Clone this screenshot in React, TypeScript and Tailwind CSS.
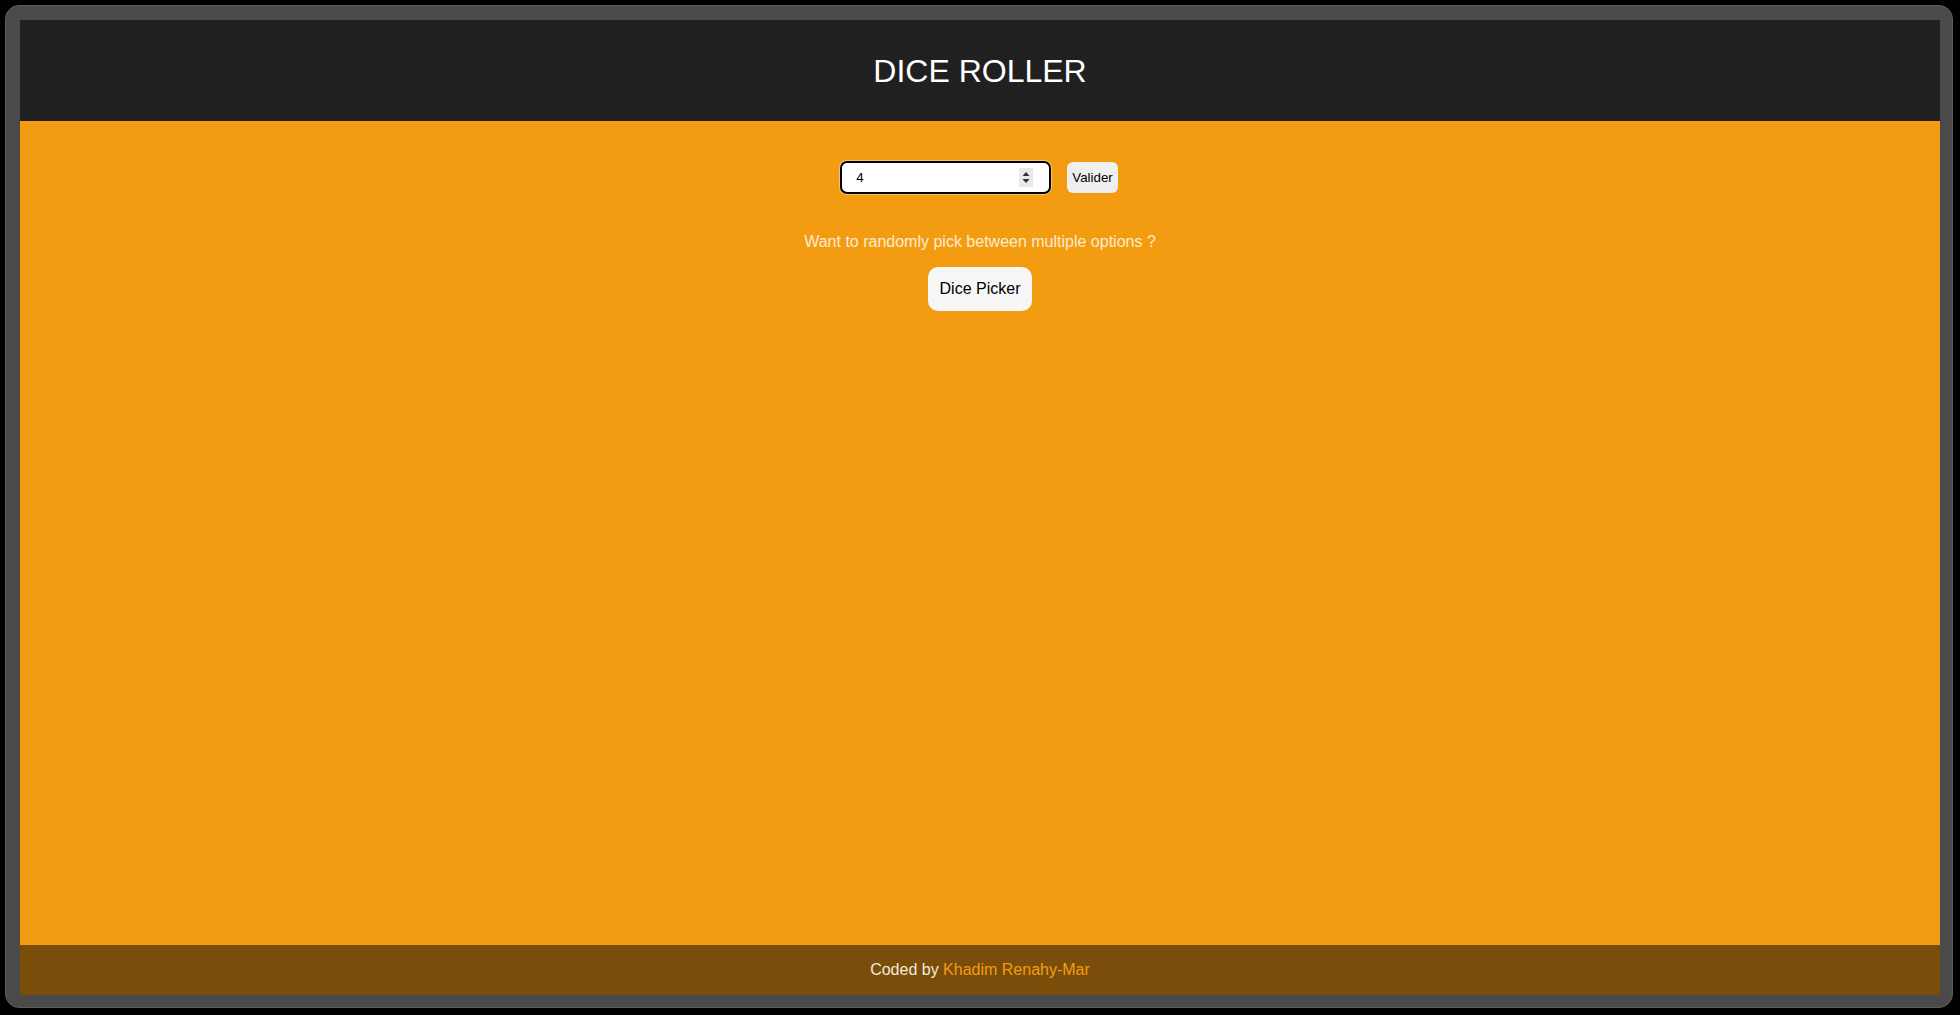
import React from 'react';

const SpinArrows: React.FC = () => (
    <div className="w-[14px] h-[19px] bg-[#e9e9e9] flex items-center justify-center">
        <svg width="8" height="13" viewBox="0 0 8 13">
            <path d="M4 1 L7.5 5 L0.5 5 Z" fill="#333333" />
            <path d="M4 12 L7.5 8 L0.5 8 Z" fill="#333333" />
        </svg>
    </div>
);

const App: React.FC = () => {
    return (
        <div className="w-full h-screen bg-black pl-[5px] pt-[5px] pr-[7px] pb-[7px] font-['Liberation_Sans',Arial,sans-serif]">
            <div className="w-full h-full rounded-[14px] bg-[#4a4a4a] border border-[#5c5c5c] pl-[14px] pt-[14px] pr-[12px] pb-[12px] flex flex-col">
                <header className="h-[101px] bg-[#202020] flex items-center justify-center">
                    <h1 className="text-[32px] text-white tracking-normal">DICE ROLLER</h1>
                </header>

                <main className="flex-1 bg-[#f39c12] flex flex-col items-center pt-[40px]">
                    <div className="flex items-center gap-4 mr-[2px]">
                        <div className="w-[211px] h-[33px] rounded-[7px] border-2 border-black bg-white ring-1 ring-white/40 flex items-center justify-between pl-[14px] pr-[16px]">
                            <span className="text-[13.33px] text-black">4</span>
                            <SpinArrows />
                        </div>
                        <button className="h-[31px] px-[5px] rounded-[6px] bg-[#efefef] text-[13.33px] text-black">
                            Valider
                        </button>
                    </div>

                    <p className="mt-[36px] text-[16px] text-[#fdebd0]">
                        Want to randomly pick between multiple options ?
                    </p>

                    <button className="mt-[13px] h-[44px] px-3 rounded-[10px] bg-[#f6f6f6] text-[16px] text-black">
                        Dice Picker
                    </button>
                </main>

                <footer className="h-[50px] bg-[#7a4e0a] flex items-center justify-center text-[16px]">
                    <span className="text-[#f4ead9]">Coded by&nbsp;</span>
                    <span className="text-[#f39c12]">Khadim Renahy-Mar</span>
                </footer>
            </div>
        </div>
    );
};

export default App;
